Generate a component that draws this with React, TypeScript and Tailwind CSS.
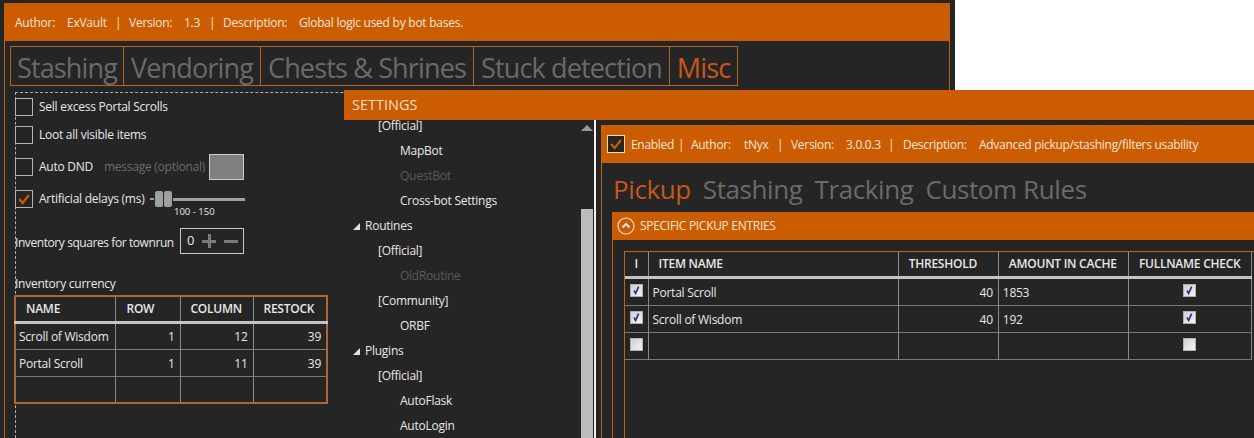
import React from "react";

const font = { fontFamily: '"Open Sans", "Noto Sans", sans-serif' };

function OrangeCheck() {
  return (
    <svg viewBox="0 0 18 18" className="w-full h-full">
      <path d="M3.5 9 L7.5 13.5 L14.5 4.5" fill="none" stroke="#cc5c02" strokeWidth="2.4" />
    </svg>
  );
}

function Box({ checked }: { checked?: boolean }) {
  return (
    <div className="w-[18px] h-[18px] shrink-0 border border-[#b4b4b4] bg-[#252525]">{checked && <OrangeCheck />}</div>
  );
}

function WinCheck({ checked }: { checked?: boolean }) {
  return (
    <div className="w-[13px] h-[13px] -mt-[2px] border border-[#b0b0b0] bg-gradient-to-br from-[#cfcfcf] to-[#f4f4f4] mx-auto">
      {checked && (
        <svg viewBox="0 0 13 13" className="w-full h-full">
          <path d="M3.5 6.5 L5.5 10 L9 2" fill="none" stroke="#332e90" strokeWidth="2" />
        </svg>
      )}
    </div>
  );
}

function BackTab({ label, w, active }: { label: string; w: string; active?: boolean }) {
  return (
    <div
      className={`${w} h-[40px] -mr-px border border-[#b5651d] flex items-center justify-center pt-[5px] text-[27px] tracking-[-0.85px] ${
        active ? "text-[#c8561a]" : "text-[#6a6a6a]"
      }`}
    >
      {label}
    </div>
  );
}

function Tree({ label, indent, dim, arrow }: { label: string; indent: string; dim?: boolean; arrow?: boolean }) {
  return (
    <div className={`h-[25px] flex items-center ${indent} ${dim ? "text-[#5a5a5a]" : "text-[#e8e8e8]"}`}>
      {arrow && (
        <svg viewBox="0 0 8 8" className="w-[7px] h-[7px] mr-[5px] -ml-[12px]">
          <path d="M0 8 L8 8 L8 0 Z" fill="#e0e0e0" />
        </svg>
      )}
      {label}
    </div>
  );
}

const leftRows = [
  ["Scroll of Wisdom", "1", "12", "39"],
  ["Portal Scroll", "1", "11", "39"],
  ["", "", "", ""],
];

const rightRows = [
  ["Portal Scroll", "40", "1853", true],
  ["Scroll of Wisdom", "40", "192", true],
  ["", "", "", false],
] as const;

export default function App() {
  return (
    <div className="relative w-[1254px] h-[438px] overflow-hidden bg-white text-[12px] tracking-[-0.25px] text-[#e8e8e8]" style={font}>
      {/* Back window */}
      <div className="w-[955px] h-[438px] bg-[#252525] pt-[3px] pl-[4px] pr-[5px] flex flex-col">
        <div className="h-[38px] shrink-0 bg-[#cc5c02] flex items-center pl-[11px] pt-[1px] text-[#f4e6d8] whitespace-nowrap">
          <span className="w-[52px]">Author:</span>
          <span className="w-[48px]">ExVault</span>
          <span className="w-[14px]">|</span>
          <span className="w-[55px]">Version:</span>
          <span className="w-[25px]">1.3</span>
          <span className="w-[14px]">|</span>
          <span className="w-[76px]">Description:</span>
          <span>Global logic used by bot bases.</span>
        </div>
        <div className="flex-1 border-l border-r border-[#b5651d] pl-[5px] pt-[5px]">
          <div className="flex">
            <BackTab label="Stashing" w="w-[114px]" />
            <BackTab label="Vendoring" w="w-[138px]" />
            <BackTab label="Chests & Shrines" w="w-[214px]" />
            <BackTab label="Stuck detection" w="w-[197px]" />
            <BackTab label="Misc" w="w-[69px]" active />
          </div>
          <div className="mt-[6px] ml-[5px] h-[346px] border-l border-t border-dashed border-[#b0b0b0]">
            <div className="-ml-px flex flex-col">
              <div className="h-[27px] flex items-center gap-[6px]">
                <Box />
                Sell excess Portal Scrolls
              </div>
              <div className="h-[28px] mt-[1px] flex items-center gap-[6px]">
                <Box />
                Loot all visible items
              </div>
              <div className="h-[36px] flex items-center gap-[6px]">
                <Box />
                <span className="w-[59px]">Auto DND</span>
                <span className="w-[100px] text-[#6a6a6a] whitespace-nowrap">message (optional)</span>
                <div className="w-[35px] h-[26px] -ml-[1px] border border-[#cccccc] bg-[#808080]" />
              </div>
              <div className="h-[28px] flex items-center gap-[6px]">
                <Box checked />
                <span className="w-[105px] whitespace-nowrap">Artificial delays (ms)</span>
                <div className="w-[95px] h-[16px] flex items-center gap-[1px]">
                  <div className="w-[4px] h-[2px] bg-[#a0a0a0]" />
                  <div className="w-[8px] h-[16px] rounded-[2px] bg-[#a0a0a0]" />
                  <div className="w-[8px] h-[16px] rounded-[2px] bg-[#a0a0a0]" />
                  <div className="flex-1 h-[3px] bg-[#a0a0a0]" />
                </div>
              </div>
              <div className="pl-[159px] -mt-[8px] h-[14px] text-[9.5px] leading-[14px] tracking-normal">100 - 150</div>
              <div className="mt-[9px] h-[26px] flex items-center justify-between w-[229px]">
                <span className="mt-[3px] tracking-[-0.42px] whitespace-nowrap">Inventory squares for townrun</span>
                <div className="w-[64px] h-[26px] border border-[#c8c8c8] flex items-center pl-[6px] text-[13px]">
                  0
                  <span className="relative ml-[8px] w-[14px] h-[14px] flex items-center">
                    <span className="block w-[14px] h-[3px] bg-[#7a7a7a]" />
                    <span className="absolute left-[5.5px] top-0 w-[3px] h-[14px] bg-[#7a7a7a]" />
                  </span>
                  <span className="ml-[8px] w-[14px] h-[3px] bg-[#7a7a7a]" />
                </div>
              </div>
              <div className="mt-[21px] h-[18px] leading-[18px]">Inventory currency</div>
              <table className="mt-[2px] -ml-px w-[312px] table-fixed border-collapse border-2 border-[#a8683a]">
                <colgroup>
                  <col className="w-[100px]" />
                  <col className="w-[65px]" />
                  <col className="w-[73px]" />
                  <col className="w-[74px]" />
                </colgroup>
                <thead>
                  <tr className="h-[26px] border-b-[3px] border-[#c4c4c4]">
                    <th className="text-left pl-[10px] font-semibold border-r border-[#8a8a8a]">NAME</th>
                    <th className="text-left pl-[11px] font-semibold border-r border-[#8a8a8a]">ROW</th>
                    <th className="text-left pl-[10px] font-semibold border-r border-[#8a8a8a]">COLUMN</th>
                    <th className="text-left pl-[10px] font-semibold">RESTOCK</th>
                  </tr>
                </thead>
                <tbody>
                  {leftRows.map((r, i) => (
                    <tr key={i} className="h-[27px] border-b border-[#7a7a7a] last:border-b-0">
                      <td className="pl-[3px] pt-[2px] border-r border-[#8a8a8a] whitespace-nowrap">{r[0]}</td>
                      <td className="pr-[5px] pt-[2px] text-right border-r border-[#8a8a8a]">{r[1]}</td>
                      <td className="pr-[5px] pt-[2px] text-right border-r border-[#8a8a8a]">{r[2]}</td>
                      <td className="pr-[5px] pt-[2px] text-right">{r[3]}</td>
                    </tr>
                  ))}
                </tbody>
              </table>
            </div>
          </div>
        </div>
      </div>

      {/* Settings window */}
      <div className="absolute left-[344px] top-[90px] w-[910px] h-[348px] bg-[#252525] flex flex-col">
        <div className="h-[30px] shrink-0 bg-[#cc5c02] pl-[8px] pb-[1px] flex items-center text-[14.5px] tracking-normal text-[#f2ddc8]">SETTINGS</div>
        <div className="flex-1 flex min-h-0">
          <div className="w-[237px] shrink-0">
            <div className="h-[18.5px] pl-[34px] leading-[12px]">[Official]</div>
            <Tree label="MapBot" indent="pl-[56px]" />
            <Tree label="QuestBot" indent="pl-[56px]" dim />
            <Tree label="Cross-bot Settings" indent="pl-[56px]" />
            <Tree label="Routines" indent="pl-[21px]" arrow />
            <Tree label="[Official]" indent="pl-[34px]" />
            <Tree label="OldRoutine" indent="pl-[56px]" dim />
            <Tree label="[Community]" indent="pl-[34px]" />
            <Tree label="ORBF" indent="pl-[56px]" />
            <Tree label="Plugins" indent="pl-[21px]" arrow />
            <Tree label="[Official]" indent="pl-[34px]" />
            <Tree label="AutoFlask" indent="pl-[56px]" />
            <Tree label="AutoLogin" indent="pl-[56px]" />
          </div>
          <div className="w-[12px] shrink-0 flex flex-col items-center">
            <svg viewBox="0 0 12 6" className="w-[12px] h-[6px] mt-[5px]">
              <path d="M0 6 L6 0 L12 6 Z" fill="#9a9a9a" />
            </svg>
            <div className="mt-[78px] flex-1 w-full bg-[#bcbcbc]" />
          </div>
          <div className="w-[2px] ml-[1px] shrink-0 bg-[#f0f0f0]" />
          <div className="ml-[5px] flex-1 min-w-0 pt-[5px] flex flex-col">
            <div className="h-[38px] shrink-0 bg-[#cc5c02] flex items-center pl-[6px] tracking-[-0.3px] text-[#f4e6d8] whitespace-nowrap">
              <div className="w-[18px] h-[18px] border border-[#f4dcc0] bg-[#252525] mr-[6px]">
                <OrangeCheck />
              </div>
              <span className="pt-[1px] w-[47px]">Enabled</span>
              <span className="pt-[1px] w-[13px]">|</span>
              <span className="pt-[1px] w-[53px]">Author:</span>
              <span className="pt-[1px] w-[33px]">tNyx</span>
              <span className="pt-[1px] w-[14px]">|</span>
              <span className="pt-[1px] w-[55px]">Version:</span>
              <span className="pt-[1px] w-[42px]">3.0.0.3</span>
              <span className="pt-[1px] w-[15px]">|</span>
              <span className="pt-[1px] w-[76px]">Description:</span>
              <span className="pt-[1px]">Advanced pickup/stashing/filters usability</span>
            </div>
            <div className="flex-1 border-l border-[#b5651d] pl-[10px] flex flex-col">
              <div className="h-[49px] shrink-0 flex items-center gap-[12px] pl-[1px] pt-[3px] text-[26px] tracking-[-0.4px] text-[#6a6a6a]">
                <span className="text-[#c8561a]">Pickup</span>
                <span>Stashing</span>
                <span>Tracking</span>
                <span>Custom Rules</span>
              </div>
              <div className="h-[28px] shrink-0 bg-[#cc5c02] flex items-center pl-[5px] gap-[5px] tracking-[-0.3px] text-[#f4e6d8]">
                <svg viewBox="0 0 18 18" className="w-[18px] h-[18px]">
                  <circle cx="9" cy="9" r="8" fill="none" stroke="#f4e6d8" strokeWidth="1.2" />
                  <path d="M5.5 10.5 L9 7 L12.5 10.5" fill="none" stroke="#f4e6d8" strokeWidth="2" />
                </svg>
                SPECIFIC PICKUP ENTRIES
              </div>
              <div className="flex-1 border-l border-[#b5651d] pl-[11px] pt-[11px] min-h-0">
                <div className="h-full border-l border-t border-[#b5651d]">
                  <table className="w-[627px] table-fixed border-collapse">
                    <colgroup>
                      <col className="w-[23px]" />
                      <col className="w-[250px]" />
                      <col className="w-[100px]" />
                      <col className="w-[130px]" />
                      <col className="w-[123px]" />
                    </colgroup>
                    <thead>
                      <tr className="h-[25px] border-b-[3px] border-[#c4c4c4]">
                        <th className="font-semibold border-r border-[#8a8a8a]">I</th>
                        <th className="font-semibold text-left pl-[10px] border-r border-[#8a8a8a]">ITEM NAME</th>
                        <th className="font-semibold text-left pl-[10px] border-r border-[#8a8a8a]">THRESHOLD</th>
                        <th className="font-semibold text-left pl-[10px] border-r border-[#8a8a8a] overflow-hidden whitespace-nowrap">AMOUNT IN CACHE</th>
                        <th className="font-semibold text-left pl-[10px] border-r border-[#8a8a8a] whitespace-nowrap">FULLNAME CHECK</th>
                      </tr>
                    </thead>
                    <tbody>
                      {rightRows.map((r, i) => (
                        <tr key={i} className={`${i === 0 ? "h-[28px]" : "h-[27px]"} border-b border-[#7a7a7a]`}>
                          <td className="border-r border-[#8a8a8a]">
                            <WinCheck checked={r[3]} />
                          </td>
                          <td className="pl-[4px] pt-[3px] border-r border-[#8a8a8a]">{r[0]}</td>
                          <td className="pr-[5px] pt-[3px] text-right border-r border-[#8a8a8a]">{r[1]}</td>
                          <td className="pl-[4px] pt-[3px] border-r border-[#8a8a8a]">{r[2]}</td>
                          <td className="border-r border-[#8a8a8a]">
                            <WinCheck checked={r[3]} />
                          </td>
                        </tr>
                      ))}
                    </tbody>
                  </table>
                </div>
              </div>
            </div>
          </div>
        </div>
      </div>
    </div>
  );
}
